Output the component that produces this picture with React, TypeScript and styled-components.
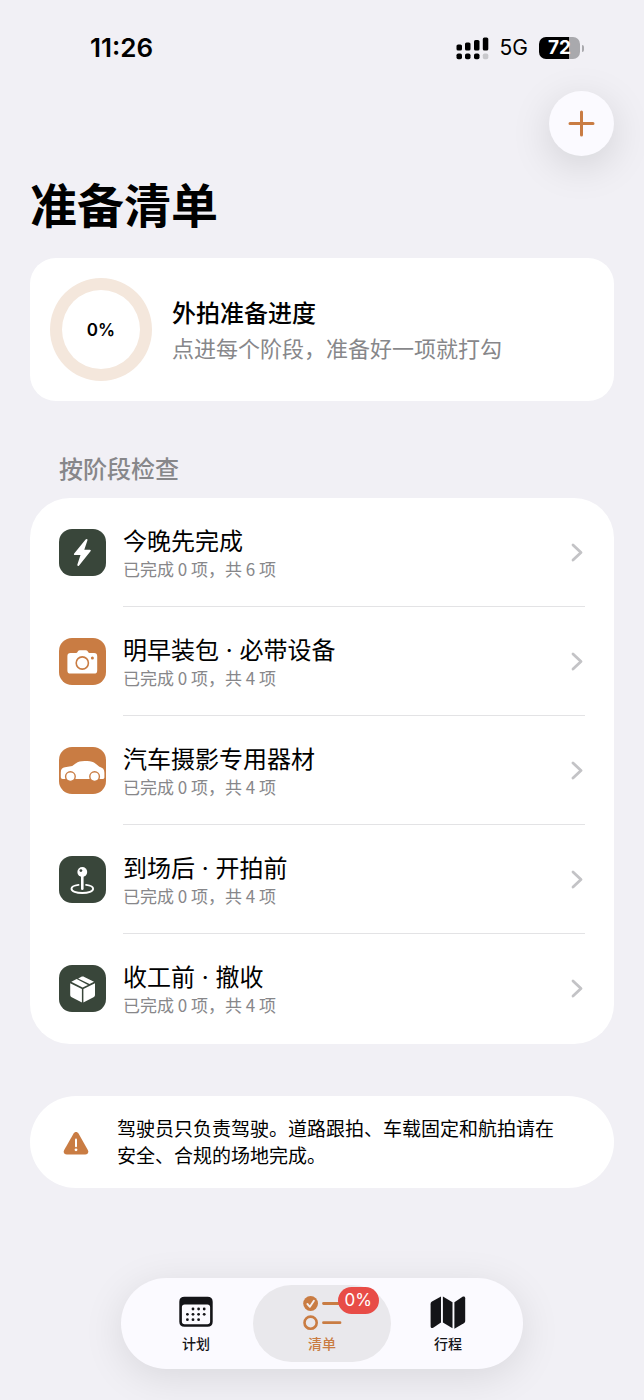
import React from "react";
import styled, { createGlobalStyle } from "styled-components";

const color = {
  page: "#f1f0f5",
  card: "#ffffff",
  glass: "#fbfaff",
  ink: "#000000",
  muted: "#87878a",
  line: "#e3e3e5",
  chevron: "#c3c3c6",
  orange: "#c97c43",
  green: "#39463a",
  red: "#e84c47",
  track: "#f4e7dc",
};

const GlobalStyle = createGlobalStyle`
  *, *::before, *::after { box-sizing: border-box; }
  body {
    margin: 0;
    background: ${color.page};
    color: ${color.ink};
    font-family: Inter, "Noto Sans CJK SC", sans-serif;
  }
  button { font: inherit; }
  a { color: inherit; text-decoration: none; }
  svg { flex: none; }
`;

const Page = styled.div`
  display: flex;
  flex-direction: column;
  min-height: 100vh;
  padding: 0 30px;
`;

const StatusBar = styled.div`
  display: flex;
  align-items: center;
  justify-content: space-between;
  height: 91px;
  padding: 5px 30px 0 60px;
`;

const Clock = styled.time`
  font-size: 26px;
  font-weight: 600;
  line-height: 30px;
`;

const StatusIcons = styled.div`
  display: flex;
  align-items: center;
  gap: 11px;
`;

const Network = styled.span`
  font-size: 21px;
  line-height: 26px;
`;

const Battery = styled.div`
  display: flex;
  align-items: center;
  gap: 2px;
`;

const BatteryBody = styled.div<{ $level: number }>`
  display: grid;
  place-items: center;
  width: 41px;
  height: 22px;
  border-radius: 7px;
  background: linear-gradient(
    to right,
    #000 ${(p) => p.$level}%,
    #a9a9ad ${(p) => p.$level}%
  );
  color: #fff;
  font-size: 19px;
  font-weight: 700;
  line-height: 22px;
`;

const BatteryTip = styled.div`
  width: 2px;
  height: 7px;
  border-radius: 0 2px 2px 0;
  background: #a9a9ad;
`;

const Toolbar = styled.div`
  display: flex;
  justify-content: flex-end;
`;

const AddButton = styled.button`
  display: grid;
  place-items: center;
  width: 65px;
  height: 65px;
  padding: 0;
  border: 0;
  border-radius: 50%;
  background: ${color.glass};
  color: ${color.orange};
  box-shadow: 0 10px 40px rgba(0, 0, 0, 0.13);
`;

const Title = styled.h1`
  margin: 20px 0 22px;
  font-size: 47px;
  font-weight: 700;
  line-height: 60px;
`;

const ProgressCard = styled.section`
  display: flex;
  align-items: center;
  gap: 20px;
  padding: 20px;
  border-radius: 26px;
  background: ${color.card};
`;

const Ring = styled.div`
  display: grid;
  flex: none;
  place-items: center;
  width: 102px;
  height: 103px;
  border: 12px solid ${color.track};
  border-radius: 50%;
  font-size: 17px;
  font-weight: 600;
`;

const ProgressText = styled.div`
  padding-top: 2px;
`;

const ProgressTitle = styled.h2`
  margin: 0;
  font-size: 24px;
  font-weight: 500;
  line-height: 36px;
`;

const ProgressHint = styled.p`
  margin: 0;
  color: ${color.muted};
  font-size: 22px;
  line-height: 34px;
`;

const SectionTitle = styled.h2`
  margin: 51px 29px 10px;
  color: ${color.muted};
  font-size: 24px;
  font-weight: 500;
  line-height: 36px;
`;

const StageList = styled.ul`
  margin: 0;
  padding: 0 29px 1px;
  border-radius: 40px;
  background: ${color.card};
  list-style: none;
`;

const StageLink = styled.a`
  display: flex;
  align-items: center;
  gap: 17px;
`;

const Tile = styled.span<{ $tone: "green" | "orange" }>`
  display: grid;
  flex: none;
  place-items: center;
  width: 47px;
  height: 47px;
  border-radius: 13px;
  background: ${(p) => color[p.$tone]};
  color: #fff;
`;

const StageBody = styled.span`
  display: flex;
  flex: 1;
  align-items: center;
  justify-content: space-between;
  height: 109px;
  border-bottom: 1px solid ${color.line};

  li:last-child & {
    border-color: transparent;
  }
`;

const StageText = styled.span`
  display: block;
  padding-top: 4px;
`;

const StageName = styled.span`
  display: block;
  font-size: 24px;
  line-height: 30px;
`;

const StageCount = styled.span`
  display: block;
  color: ${color.muted};
  font-family: "Noto Sans CJK SC", sans-serif;
  font-size: 17px;
  line-height: 24px;
`;

const ChevronBox = styled.span`
  display: flex;
  padding-right: 2px;
`;

const Notice = styled.aside`
  display: flex;
  align-items: center;
  gap: 28px;
  margin-top: 52px;
  padding: 20px 44px 18px 33px;
  border-radius: 46px;
  background: ${color.card};
`;

const NoticeText = styled.p`
  margin: 0;
  font-size: 19px;
  line-height: 27px;
`;

const TabBar = styled.nav`
  position: sticky;
  bottom: 31px;
  display: grid;
  grid-template-columns: repeat(3, 1fr);
  width: min(402px, 100%);
  margin: auto auto 31px;
  padding: 7px 12px;
  border-radius: 46px;
  background: ${color.glass};
  box-shadow: 0 8px 40px rgba(0, 0, 0, 0.1);
`;

const Tab = styled.a<{ $active?: boolean }>`
  display: flex;
  flex-direction: column;
  align-items: center;
  gap: 3px;
  margin: 0 -6px;
  padding: 11px 0 8px;
  border-radius: 40px;
  background: ${(p) => (p.$active ? "#e9e8ec" : "transparent")};
  color: ${(p) => (p.$active ? color.orange : "#141418")};
  font-size: 14px;
  font-weight: 500;
  line-height: 20px;
`;

const TabIcon = styled.span`
  position: relative;
  display: flex;
  height: 35px;
`;

const Badge = styled.span`
  position: absolute;
  top: -9px;
  left: 35px;
  padding: 0 7px;
  border-radius: 14px;
  background: ${color.red};
  color: #fff;
  font-size: 17px;
  font-weight: 400;
  line-height: 27px;
`;

const SignalIcon = () => (
  <svg width="33" height="23" viewBox="0 0 33 23" aria-hidden="true">
    <rect x="0.5" y="7.5" width="5.5" height="6" rx="1.6" />
    <rect x="9" y="5.5" width="5.5" height="8" rx="1.6" />
    <rect x="18" y="3" width="5.5" height="10.5" rx="1.6" />
    <rect x="26.8" y="0.5" width="5.5" height="13" rx="1.6" />
    <rect x="0.5" y="16.5" width="5.5" height="5.7" rx="1.8" />
    <rect x="9" y="16.5" width="5.5" height="5.7" rx="1.8" />
    <rect x="18" y="16.5" width="5.5" height="5.7" rx="1.8" />
    <rect x="26.8" y="16.5" width="5.5" height="5.7" rx="1.8" fill="#c8c8cc" />
  </svg>
);

const PlusIcon = () => (
  <svg width="27" height="27" viewBox="0 0 27 27" fill="none" stroke="currentColor" strokeWidth="3" strokeLinecap="round" aria-hidden="true">
    <path d="M13.5 2v23M2 13.5h23" />
  </svg>
);

const BoltIcon = () => (
  <svg width="47" height="47" viewBox="0 0 47 47" fill="currentColor" aria-hidden="true">
    <path d="M26.6 10.6 15.2 24.4c-.6.8-.3 1.6.7 1.6h5.6l-3.1 9.6c-.4 1.3.8 1.8 1.7.8l11.4-14.1c.6-.8.3-1.6-.7-1.6h-5.5l3.1-9.3c.4-1.3-.9-1.8-1.8-.8Z" />
  </svg>
);

const CameraIcon = () => (
  <svg width="47" height="47" viewBox="0 0 47 47" aria-hidden="true">
    <path
      fill="currentColor"
      d="M11.6 15h5.2c.8 0 1.2-.3 1.7-1l.6-.9c.4-.6.9-.9 1.7-.9h6c.8 0 1.3.3 1.7.9l.6.9c.5.7.9 1 1.7 1h4.2c2.2 0 3.2 1.1 3.2 3.2v14.2c0 2.1-1 3.2-3.2 3.2H11.6c-2.2 0-3.2-1.1-3.2-3.2V18.2c0-2.1 1-3.2 3.2-3.2Z"
    />
    <circle cx="23.3" cy="25" r="6.1" fill="none" stroke={color.orange} strokeWidth="1.6" />
    <circle cx="33.4" cy="20" r="1.5" fill={color.orange} />
  </svg>
);

const CarIcon = () => (
  <svg width="47" height="47" viewBox="0 0 47 47" aria-hidden="true">
    <path
      fill="currentColor"
      d="M1.800 25.500c0-3.500 1.400-4.800 4.200-5.300l7.200-1.300 3.400-2.300c2.700-1.800 5-2.500 9-2.500h2.600c3.800 0 6 .8 8.800 2.900l3.400 2.700c3.600 1 5 2.600 5 6.200v4.300c0 1.200-.7 1.800-1.900 1.800H3.700c-1.200 0-1.900-.7-1.900-1.900Z"
    />
    <g fill="currentColor" stroke={color.orange} strokeWidth="1.4">
      <circle cx="11.400" cy="29.600" r="4.800" />
      <circle cx="35.600" cy="29.600" r="4.800" />
    </g>
  </svg>
);

const PinIcon = () => (
  <svg width="47" height="47" viewBox="0 0 47 47" aria-hidden="true">
    <path
      d="M19.5 28.900c-4.200.5-7 1.900-7 3.800 0 2.500 4.700 4.300 10.800 4.300s10.800-1.800 10.800-4.300c0-1.900-2.800-3.300-7-3.800"
      fill="none"
      stroke="currentColor"
      strokeWidth="1.9"
      strokeLinecap="round"
    />
    <path d="M23.3 18v14.800" stroke="currentColor" strokeWidth="2.6" strokeLinecap="round" />
    <circle cx="23.3" cy="16" r="4.9" fill="currentColor" />
    <circle cx="21.9" cy="14.6" r="1.4" fill={color.green} />
  </svg>
);

const BoxIcon = () => (
  <svg width="47" height="47" viewBox="0 0 47 47" fill="currentColor" aria-hidden="true">
    <path d="M11.200 18.300 22.900 24v13.400c-.3 0-.6-.1-.9-.3l-9.300-4.800c-1.100-.6-1.500-1.300-1.500-2.500Z" />
    <path d="M36 18.300 24.400 24v13.400c.3 0 .6-.1.900-.3l9.200-4.800c1.100-.6 1.500-1.300 1.500-2.500Z" />
    <path d="M12.300 16.800 17.600 14.100 29 19.900l-5.400 2.700Z" />
    <path d="M19.100 13.400 22 11.900c1.100-.6 2.200-.6 3.300 0l9.700 4.900-4.500 2.300Z" />
  </svg>
);

const ChevronIcon = () => (
  <svg width="12" height="19" viewBox="0 0 12 19" fill="none" stroke={color.chevron} strokeWidth="2.8" strokeLinecap="round" strokeLinejoin="round" aria-hidden="true">
    <path d="m2 2 8 7.500L2 17" />
  </svg>
);

const WarningIcon = () => (
  <svg width="26" height="25" viewBox="0 0 26 25" aria-hidden="true">
    <path
      fill={color.orange}
      d="M10.600 2.400c1.200-2 3.700-2 4.900 0l9.300 16.500c1.300 2.400 0 4.700-2.600 4.700H3.800c-2.600 0-3.900-2.300-2.600-4.700Z"
    />
    <path d="M13 8.400v6.800" stroke="#fff" strokeWidth="2" strokeLinecap="round" />
    <circle cx="13" cy="18.800" r="1.4" fill="#fff" />
  </svg>
);

const dots = [
  [14, 13], [19.6, 13], [25.2, 13],
  [8.4, 18.3], [14, 18.3], [19.6, 18.3], [25.2, 18.3],
  [8.4, 23.7], [14, 23.7], [19.6, 23.7],
];

const CalendarIcon = () => (
  <svg width="34" height="35" viewBox="0 0 34 35" aria-hidden="true">
    <path
      fill="currentColor"
      fillRule="evenodd"
      d="M5.500 0.800h23c3.300 0 5.200 1.800 5.200 5v20c0 3.200-1.900 5-5.200 5h-23c-3.300 0-5.200-1.800-5.200-5v-20c0-3.200 1.900-5 5.200-5ZM5.600 8.400c-1.700 0-2.700.9-2.700 2.600v14.500c0 1.800 1 2.700 2.700 2.700h22.800c1.700 0 2.700-.9 2.700-2.700V11c0-1.700-1-2.600-2.700-2.600Z"
    />
    {dots.map(([x, y]) => (
      <circle key={`${x}-${y}`} cx={x} cy={y} r="1.4" fill="currentColor" />
    ))}
  </svg>
);

const ChecklistIcon = () => (
  <svg width="39" height="35" viewBox="0 0 39 35" fill="none" aria-hidden="true">
    <circle cx="7.600" cy="7.500" r="7.400" fill="currentColor" />
    <path d="m4.400 8 2.500 2.800 4-6" stroke="#f3eeee" strokeWidth="1.9" strokeLinecap="round" strokeLinejoin="round" />
    <circle cx="7.600" cy="26.700" r="6.100" stroke="currentColor" strokeWidth="2.6" />
    <path d="M20.500 7.500h16.500M20.500 26.700h16.500" stroke="currentColor" strokeWidth="2.8" strokeLinecap="round" />
  </svg>
);

const MapIcon = () => (
  <svg width="36" height="35" viewBox="0 0 36 35" fill="currentColor" aria-hidden="true">
    <path d="M11 .6v26L3.200 31.700C1.700 32.600.6 32 .6 30.300V8.200c0-1.200.4-2 1.400-2.600Z" />
    <path d="M12.900.6 22.500 6.300v26l-9.600-5.700Z" />
    <path d="M24.400 6.300 32.200 1c1.600-1 3-.4 3 1.300v22.500c0 1.200-.4 1.900-1.400 2.500l-9.400 5.500Z" />
  </svg>
);

const stages = [
  { name: "今晚先完成", total: 6, tone: "green", Icon: BoltIcon },
  { name: "明早装包 · 必带设备", total: 4, tone: "orange", Icon: CameraIcon },
  { name: "汽车摄影专用器材", total: 4, tone: "orange", Icon: CarIcon },
  { name: "到场后 · 开拍前", total: 4, tone: "green", Icon: PinIcon },
  { name: "收工前 · 撤收", total: 4, tone: "green", Icon: BoxIcon },
] as const;

export default function App() {
  return (
    <>
      <GlobalStyle />
      <Page>
        <StatusBar>
          <Clock>11:26</Clock>
          <StatusIcons>
            <SignalIcon />
            <Network>5G</Network>
            <Battery>
              <BatteryBody $level={72}>72</BatteryBody>
              <BatteryTip />
            </Battery>
          </StatusIcons>
        </StatusBar>

        <Toolbar>
          <AddButton type="button" aria-label="添加">
            <PlusIcon />
          </AddButton>
        </Toolbar>

        <main>
          <Title>准备清单</Title>

          <ProgressCard>
            <Ring>0%</Ring>
            <ProgressText>
              <ProgressTitle>外拍准备进度</ProgressTitle>
              <ProgressHint>点进每个阶段，准备好一项就打勾</ProgressHint>
            </ProgressText>
          </ProgressCard>

          <SectionTitle>按阶段检查</SectionTitle>
          <StageList>
            {stages.map(({ name, total, tone, Icon }) => (
              <li key={name}>
                <StageLink href="#">
                  <Tile $tone={tone}>
                    <Icon />
                  </Tile>
                  <StageBody>
                    <StageText>
                      <StageName>{name}</StageName>
                      <StageCount>{`已完成 0 项，共 ${total} 项`}</StageCount>
                    </StageText>
                    <ChevronBox>
                      <ChevronIcon />
                    </ChevronBox>
                  </StageBody>
                </StageLink>
              </li>
            ))}
          </StageList>

          <Notice>
            <WarningIcon />
            <NoticeText>
              驾驶员只负责驾驶。道路跟拍、车载固定和航拍请在安全、合规的场地完成。
            </NoticeText>
          </Notice>
        </main>

        <TabBar>
          <Tab href="#plan">
            <TabIcon>
              <CalendarIcon />
            </TabIcon>
            计划
          </Tab>
          <Tab href="#list" $active aria-current="page">
            <TabIcon>
              <ChecklistIcon />
              <Badge>0%</Badge>
            </TabIcon>
            清单
          </Tab>
          <Tab href="#trip">
            <TabIcon>
              <MapIcon />
            </TabIcon>
            行程
          </Tab>
        </TabBar>
      </Page>
    </>
  );
}
